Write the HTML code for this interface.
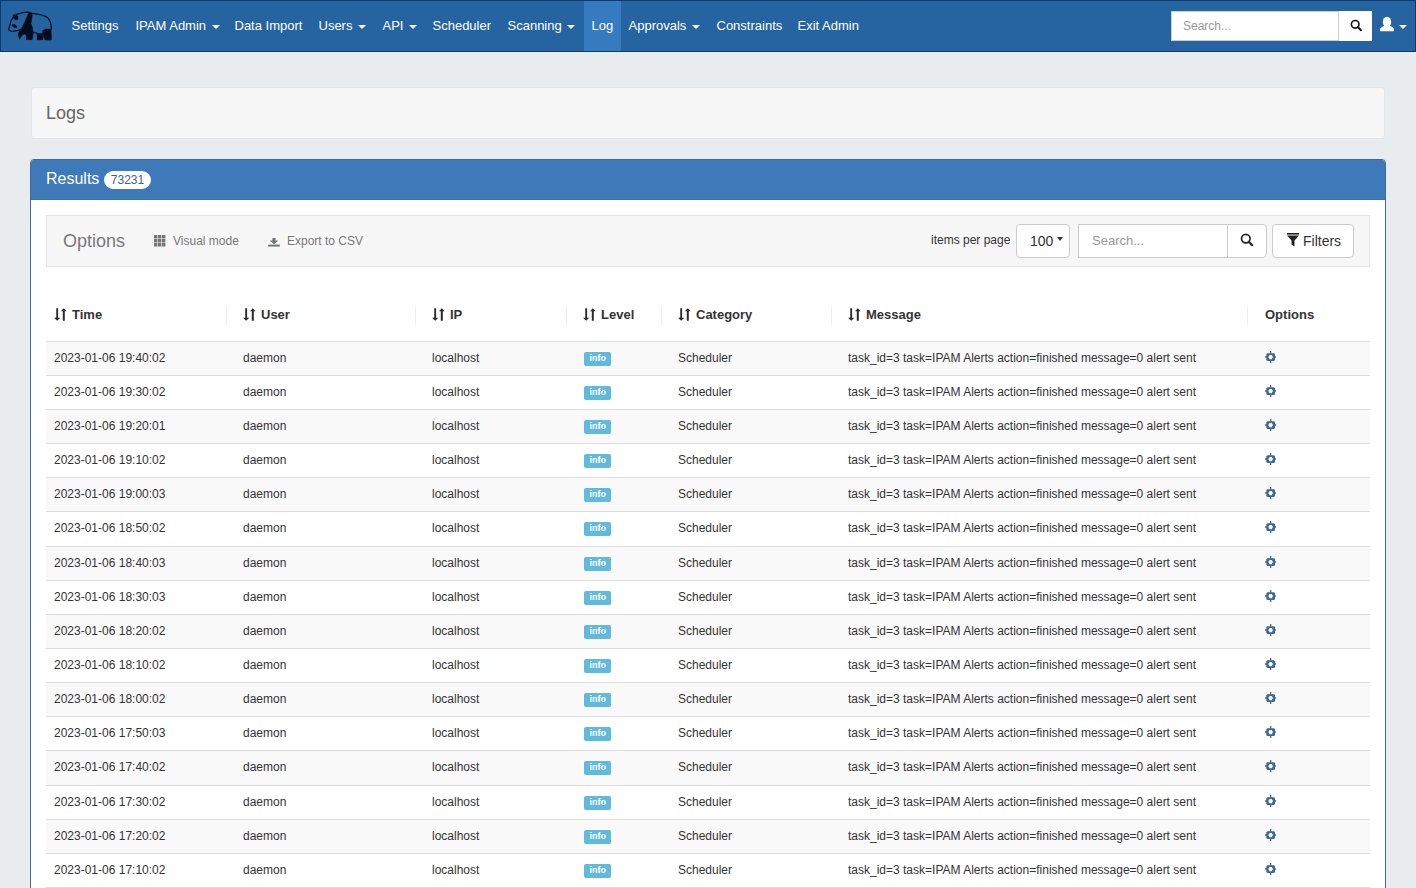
<!DOCTYPE html>
<html><head><meta charset="utf-8">
<style>
*{box-sizing:border-box;margin:0;padding:0}
html,body{width:1416px;height:888px;overflow:hidden}
body{background:#e9ecef;font-family:"Liberation Sans",sans-serif;color:#333;position:relative}
.abs{position:absolute;white-space:nowrap}
#nav{position:absolute;left:0;top:0;width:1416px;height:52px;background:#2564a0;border:1px solid #0e3a6c}
.ni{position:absolute;top:0;height:50px;line-height:50px;font-size:13px;color:#fff;white-space:nowrap}
.caret{display:inline-block;width:0;height:0;border-top:4px solid #fff;border-left:4px solid transparent;border-right:4px solid transparent;vertical-align:middle;margin-left:5.5px;position:relative;top:0px}
#logs{position:absolute;left:31px;top:87px;width:1354px;height:52px;background:#f7f7f7;border:1px solid #e3e5e7;border-radius:3px}
#panel{position:absolute;left:30px;top:159px;width:1356px;height:760px;background:#fff;border:1px solid #46698f;border-radius:4px;overflow:hidden}
#ph{position:absolute;left:0;top:0;width:1354px;height:40px;background:#3e7ab9;border-bottom:1px solid #3a6ea6}
#opt{position:absolute;left:15px;top:55px;width:1324px;height:52px;background:#f7f7f7;border:1px solid #e3e3e3}
table{position:absolute;left:15px;top:180.7px;width:1324px;border-collapse:collapse;font-size:12px;line-height:1.42857143}
td{padding:8px;border-top:1px solid #ddd;white-space:nowrap;vertical-align:top}
tr:nth-child(odd) td{background:#f9f9f9}
.lbl{display:inline-block;background:#61b9dc;color:#fff;font-weight:bold;font-size:9px;line-height:1;padding:2px 5.4px 3px;border-radius:2px;vertical-align:1px;margin-left:1px}
.th{position:absolute;top:0;font-size:13px;font-weight:bold;color:#333}
.sep{position:absolute;width:1px;height:17px;background:#eee}
</style></head><body>
<div id="nav">
  <svg class="abs" style="left:5px;top:7px" width="50" height="36" viewBox="0 0 1233 888">
    <g fill="#020c1c" stroke="#020c1c" stroke-linejoin="round">
      <path fill="none" stroke-width="30" d="M260 160 C330 135 420 100 520 100 C560 102 600 115 650 135 C780 150 920 170 1020 235 C1100 300 1120 400 1115 540"/>
      <path fill="none" stroke-width="30" d="M185 220 C140 270 110 340 95 420 C85 470 60 510 75 545 C100 580 200 575 280 560 C320 552 350 540 385 520"/>
      <path stroke-width="8" d="M175 170 L260 152 L300 225 L292 285 L232 292 L180 250 Z"/>
      <path stroke-width="8" d="M150 415 L205 400 L268 445 L266 490 L205 482 L152 445 Z"/>
      <path stroke-width="8" d="M560 108 L650 132 L642 250 L618 380 L652 480 L672 600 L662 700 L645 782 L492 782 L505 705 L475 648 L425 648 L380 700 L338 770 L305 690 L302 630 L342 560 L402 470 L442 380 L502 250 Z"/>
      <path fill="none" stroke-width="26" d="M665 600 C700 610 730 615 760 625"/>
      <path stroke-width="8" d="M755 622 L905 632 L912 788 L762 788 L772 700 Z"/>
      <path stroke-width="8" d="M902 560 C942 510 1062 500 1112 540 L1125 778 L1100 795 L965 790 L930 730 L905 640 Z"/>
    </g>
  </svg>
  <div class="ni" style="left:70.5px">Settings</div>
  <div class="ni" style="left:134.5px">IPAM Admin<span class="caret"></span></div>
  <div class="ni" style="left:233.5px">Data Import</div>
  <div class="ni" style="left:317.5px">Users<span class="caret"></span></div>
  <div class="ni" style="left:381.5px">API<span class="caret"></span></div>
  <div class="ni" style="left:431.5px">Scheduler</div>
  <div class="ni" style="left:506.5px">Scanning<span class="caret"></span></div>
  <div class="abs" style="left:583px;top:0;width:37px;height:50px;background:#367bc0"></div>
  <div class="ni" style="left:590.5px">Log</div>
  <div class="ni" style="left:627.5px">Approvals<span class="caret"></span></div>
  <div class="ni" style="left:715.5px">Constraints</div>
  <div class="ni" style="left:796.5px">Exit Admin</div>
  <div class="abs" style="left:1170px;top:10px;width:168px;height:30px;background:#fff;border:1px solid #ccc;border-right:0"></div>
  <div class="abs" style="left:1182px;top:10px;height:30px;line-height:30px;font-size:12px;color:#999">Search...</div>
  <div class="abs" style="left:1337px;top:10px;width:34px;height:30px;background:#fff;border-left:1px solid #ccc"></div>
  <svg class="abs" style="left:1348px;top:17px" width="14" height="14" viewBox="0 0 14 14"><circle cx="6.2" cy="6.3" r="3.8" fill="none" stroke="#111" stroke-width="1.6"/><path d="M9 9.2 L12 12.2" stroke="#111" stroke-width="2" stroke-linecap="round"/></svg>
  <svg class="abs" style="left:1378px;top:15px" width="16" height="16" viewBox="0 0 16 16"><ellipse cx="8" cy="6" rx="4.2" ry="5.2" fill="#fff"/><path d="M1 15.2 L1 13.5 C1 11.8 3.5 10.8 5.5 9.8 L10.5 9.8 C12.5 10.8 15 11.8 15 13.5 L15 15.2 Z" fill="#fff"/></svg>
  <span class="caret" style="position:absolute;margin:0;left:1398px;top:24px"></span>
</div>

<div id="logs"><div class="abs" style="left:14px;top:13px;font-size:18px;line-height:24px;color:#666">Logs</div></div>

<div id="panel">
  <div id="ph">
    <div class="abs" style="left:15px;top:9px;font-size:16px;line-height:20px;color:#fff">Results <span style="display:inline-block;background:#fff;color:#41638f;font-size:12px;line-height:12px;padding:3px 7px;border-radius:10px;vertical-align:0px">73231</span></div>
  </div>
  <div id="opt">
    <div class="abs" style="left:16px;top:13px;font-size:18px;line-height:24px;color:#777">Options</div>
    <svg class="abs" style="left:107px;top:19px" width="12" height="12" viewBox="0 0 12 12" fill="#777"><path d="M0 0h3.4v3.4H0zM4 0h3.4v3.4H4zM8 0h3.4v3.4H8zM0 4h3.4v3.4H0zM4 4h3.4v3.4H4zM8 4h3.4v3.4H8zM0 8h3.4v3.4H0zM4 8h3.4v3.4H4zM8 8h3.4v3.4H8z"/></svg>
    <div class="abs" style="left:126px;top:16px;font-size:12px;line-height:18px;color:#777">Visual mode</div>
    <svg class="abs" style="left:221px;top:22px" width="12" height="9" viewBox="0 0 12 9" fill="#777"><path d="M4.4 0 H7.6 V2.6 H10.3 L6 6.2 L1.7 2.6 H4.4 Z"/><rect x="0.2" y="6.6" width="11.6" height="2"/></svg>
    <div class="abs" style="left:240px;top:16px;font-size:12px;line-height:18px;color:#777">Export to CSV</div>
    <div class="abs" style="left:884px;top:15px;font-size:12px;line-height:18px;color:#333">items per page</div>
    <div class="abs" style="left:969px;top:8px;width:54px;height:34px;background:#fff;border:1px solid #ccc;border-radius:4px"></div>
    <div class="abs" style="left:983px;top:15px;font-size:14px;line-height:20px;color:#333">100</div>
    <span class="abs" style="left:1010px;top:21px;width:0;height:0;border-top:4px solid #333;border-left:3.5px solid transparent;border-right:3.5px solid transparent"></span>
    <div class="abs" style="left:1031px;top:8px;width:189px;height:34px;background:#fff;border:1px solid #ccc;border-radius:0 4px 4px 0"></div>
    <div class="abs" style="left:1180px;top:8px;width:1px;height:34px;background:#ccc"></div>
    <div class="abs" style="left:1045px;top:16px;font-size:13px;line-height:18px;color:#999">Search...</div>
    <svg class="abs" style="left:1193px;top:17px" width="14" height="14" viewBox="0 0 14 14"><circle cx="5.8" cy="5.6" r="4.3" fill="none" stroke="#222" stroke-width="1.7"/><path d="M9 9 L12.2 12.2" stroke="#222" stroke-width="2.2" stroke-linecap="round"/></svg>
    <div class="abs" style="left:1225px;top:8px;width:82px;height:34px;background:#fff;border:1px solid #ccc;border-radius:4px"></div>
    <svg class="abs" style="left:1240px;top:17px" width="12" height="14" viewBox="0 0 12 14" fill="#222"><rect x="0" y="0" width="12" height="1.6"/><path d="M0 2.5 H12 L7.5 7.5 V13.5 L4.5 11.5 V7.5 Z"/></svg>
    <div class="abs" style="left:1256px;top:15px;font-size:14px;line-height:20px;color:#333">Filters</div>
  </div>
  <div class="sep" style="left:195px;top:148px"></div>
  <div class="sep" style="left:384px;top:148px"></div>
  <div class="sep" style="left:535px;top:148px"></div>
  <div class="sep" style="left:630px;top:148px"></div>
  <div class="sep" style="left:800px;top:148px"></div>
  <div class="sep" style="left:1216px;top:148px"></div>
  <div id="thead"><div class="th" style="left:23px;top:146px;line-height:18px"><svg width="13" height="13" viewBox="0 0 13 13" style="vertical-align:-2px;margin-right:5px"><path fill="#2a2a2a" d="M2.25 0.2 H4.1 V9.8 H6.3 L3.15 12.8 L0 9.8 H2.25 Z M8.8 12.8 H10.8 V3.3 H12.6 L9.8 0.2 L7.0 3.3 H8.8 Z"/></svg>Time</div><div class="th" style="left:212px;top:146px;line-height:18px"><svg width="13" height="13" viewBox="0 0 13 13" style="vertical-align:-2px;margin-right:5px"><path fill="#2a2a2a" d="M2.25 0.2 H4.1 V9.8 H6.3 L3.15 12.8 L0 9.8 H2.25 Z M8.8 12.8 H10.8 V3.3 H12.6 L9.8 0.2 L7.0 3.3 H8.8 Z"/></svg>User</div><div class="th" style="left:401px;top:146px;line-height:18px"><svg width="13" height="13" viewBox="0 0 13 13" style="vertical-align:-2px;margin-right:5px"><path fill="#2a2a2a" d="M2.25 0.2 H4.1 V9.8 H6.3 L3.15 12.8 L0 9.8 H2.25 Z M8.8 12.8 H10.8 V3.3 H12.6 L9.8 0.2 L7.0 3.3 H8.8 Z"/></svg>IP</div><div class="th" style="left:552px;top:146px;line-height:18px"><svg width="13" height="13" viewBox="0 0 13 13" style="vertical-align:-2px;margin-right:5px"><path fill="#2a2a2a" d="M2.25 0.2 H4.1 V9.8 H6.3 L3.15 12.8 L0 9.8 H2.25 Z M8.8 12.8 H10.8 V3.3 H12.6 L9.8 0.2 L7.0 3.3 H8.8 Z"/></svg>Level</div><div class="th" style="left:647px;top:146px;line-height:18px"><svg width="13" height="13" viewBox="0 0 13 13" style="vertical-align:-2px;margin-right:5px"><path fill="#2a2a2a" d="M2.25 0.2 H4.1 V9.8 H6.3 L3.15 12.8 L0 9.8 H2.25 Z M8.8 12.8 H10.8 V3.3 H12.6 L9.8 0.2 L7.0 3.3 H8.8 Z"/></svg>Category</div><div class="th" style="left:817px;top:146px;line-height:18px"><svg width="13" height="13" viewBox="0 0 13 13" style="vertical-align:-2px;margin-right:5px"><path fill="#2a2a2a" d="M2.25 0.2 H4.1 V9.8 H6.3 L3.15 12.8 L0 9.8 H2.25 Z M8.8 12.8 H10.8 V3.3 H12.6 L9.8 0.2 L7.0 3.3 H8.8 Z"/></svg>Message</div><div class="th" style="left:1234px;top:146px;line-height:18px">Options</div></div>
  <table id="tb"><tbody id="tbody"><tr><td style="width:189px">2023-01-06 19:40:02</td><td style="width:189px">daemon</td><td style="width:151px">localhost</td><td style="width:95px"><span class="lbl">info</span></td><td style="width:170px">Scheduler</td><td style="width:416px">task_id=3 task=IPAM Alerts action=finished message=0 alert sent</td><td style="padding-left:9px"><svg width="12" height="12" viewBox="0 0 12 12" style="vertical-align:-1px"><path fill="#3d6896" fill-rule="evenodd" d="M2.3 2.2 H5 V0 H6.3 V2.2 H9 L10 3.2 V5.2 H11 V6.7 H10 V8.9 L9 9.9 H6.3 V11.9 H5 V9.9 H2.3 L1.3 8.9 V6.7 H0 V5.2 H1.3 V3.2 Z M4.6 3.9 H6.7 L8 6.05 L6.7 8.2 H4.6 L3.3 6.05 Z"/></svg></td></tr><tr><td style="width:189px">2023-01-06 19:30:02</td><td style="width:189px">daemon</td><td style="width:151px">localhost</td><td style="width:95px"><span class="lbl">info</span></td><td style="width:170px">Scheduler</td><td style="width:416px">task_id=3 task=IPAM Alerts action=finished message=0 alert sent</td><td style="padding-left:9px"><svg width="12" height="12" viewBox="0 0 12 12" style="vertical-align:-1px"><path fill="#3d6896" fill-rule="evenodd" d="M2.3 2.2 H5 V0 H6.3 V2.2 H9 L10 3.2 V5.2 H11 V6.7 H10 V8.9 L9 9.9 H6.3 V11.9 H5 V9.9 H2.3 L1.3 8.9 V6.7 H0 V5.2 H1.3 V3.2 Z M4.6 3.9 H6.7 L8 6.05 L6.7 8.2 H4.6 L3.3 6.05 Z"/></svg></td></tr><tr><td style="width:189px">2023-01-06 19:20:01</td><td style="width:189px">daemon</td><td style="width:151px">localhost</td><td style="width:95px"><span class="lbl">info</span></td><td style="width:170px">Scheduler</td><td style="width:416px">task_id=3 task=IPAM Alerts action=finished message=0 alert sent</td><td style="padding-left:9px"><svg width="12" height="12" viewBox="0 0 12 12" style="vertical-align:-1px"><path fill="#3d6896" fill-rule="evenodd" d="M2.3 2.2 H5 V0 H6.3 V2.2 H9 L10 3.2 V5.2 H11 V6.7 H10 V8.9 L9 9.9 H6.3 V11.9 H5 V9.9 H2.3 L1.3 8.9 V6.7 H0 V5.2 H1.3 V3.2 Z M4.6 3.9 H6.7 L8 6.05 L6.7 8.2 H4.6 L3.3 6.05 Z"/></svg></td></tr><tr><td style="width:189px">2023-01-06 19:10:02</td><td style="width:189px">daemon</td><td style="width:151px">localhost</td><td style="width:95px"><span class="lbl">info</span></td><td style="width:170px">Scheduler</td><td style="width:416px">task_id=3 task=IPAM Alerts action=finished message=0 alert sent</td><td style="padding-left:9px"><svg width="12" height="12" viewBox="0 0 12 12" style="vertical-align:-1px"><path fill="#3d6896" fill-rule="evenodd" d="M2.3 2.2 H5 V0 H6.3 V2.2 H9 L10 3.2 V5.2 H11 V6.7 H10 V8.9 L9 9.9 H6.3 V11.9 H5 V9.9 H2.3 L1.3 8.9 V6.7 H0 V5.2 H1.3 V3.2 Z M4.6 3.9 H6.7 L8 6.05 L6.7 8.2 H4.6 L3.3 6.05 Z"/></svg></td></tr><tr><td style="width:189px">2023-01-06 19:00:03</td><td style="width:189px">daemon</td><td style="width:151px">localhost</td><td style="width:95px"><span class="lbl">info</span></td><td style="width:170px">Scheduler</td><td style="width:416px">task_id=3 task=IPAM Alerts action=finished message=0 alert sent</td><td style="padding-left:9px"><svg width="12" height="12" viewBox="0 0 12 12" style="vertical-align:-1px"><path fill="#3d6896" fill-rule="evenodd" d="M2.3 2.2 H5 V0 H6.3 V2.2 H9 L10 3.2 V5.2 H11 V6.7 H10 V8.9 L9 9.9 H6.3 V11.9 H5 V9.9 H2.3 L1.3 8.9 V6.7 H0 V5.2 H1.3 V3.2 Z M4.6 3.9 H6.7 L8 6.05 L6.7 8.2 H4.6 L3.3 6.05 Z"/></svg></td></tr><tr><td style="width:189px">2023-01-06 18:50:02</td><td style="width:189px">daemon</td><td style="width:151px">localhost</td><td style="width:95px"><span class="lbl">info</span></td><td style="width:170px">Scheduler</td><td style="width:416px">task_id=3 task=IPAM Alerts action=finished message=0 alert sent</td><td style="padding-left:9px"><svg width="12" height="12" viewBox="0 0 12 12" style="vertical-align:-1px"><path fill="#3d6896" fill-rule="evenodd" d="M2.3 2.2 H5 V0 H6.3 V2.2 H9 L10 3.2 V5.2 H11 V6.7 H10 V8.9 L9 9.9 H6.3 V11.9 H5 V9.9 H2.3 L1.3 8.9 V6.7 H0 V5.2 H1.3 V3.2 Z M4.6 3.9 H6.7 L8 6.05 L6.7 8.2 H4.6 L3.3 6.05 Z"/></svg></td></tr><tr><td style="width:189px">2023-01-06 18:40:03</td><td style="width:189px">daemon</td><td style="width:151px">localhost</td><td style="width:95px"><span class="lbl">info</span></td><td style="width:170px">Scheduler</td><td style="width:416px">task_id=3 task=IPAM Alerts action=finished message=0 alert sent</td><td style="padding-left:9px"><svg width="12" height="12" viewBox="0 0 12 12" style="vertical-align:-1px"><path fill="#3d6896" fill-rule="evenodd" d="M2.3 2.2 H5 V0 H6.3 V2.2 H9 L10 3.2 V5.2 H11 V6.7 H10 V8.9 L9 9.9 H6.3 V11.9 H5 V9.9 H2.3 L1.3 8.9 V6.7 H0 V5.2 H1.3 V3.2 Z M4.6 3.9 H6.7 L8 6.05 L6.7 8.2 H4.6 L3.3 6.05 Z"/></svg></td></tr><tr><td style="width:189px">2023-01-06 18:30:03</td><td style="width:189px">daemon</td><td style="width:151px">localhost</td><td style="width:95px"><span class="lbl">info</span></td><td style="width:170px">Scheduler</td><td style="width:416px">task_id=3 task=IPAM Alerts action=finished message=0 alert sent</td><td style="padding-left:9px"><svg width="12" height="12" viewBox="0 0 12 12" style="vertical-align:-1px"><path fill="#3d6896" fill-rule="evenodd" d="M2.3 2.2 H5 V0 H6.3 V2.2 H9 L10 3.2 V5.2 H11 V6.7 H10 V8.9 L9 9.9 H6.3 V11.9 H5 V9.9 H2.3 L1.3 8.9 V6.7 H0 V5.2 H1.3 V3.2 Z M4.6 3.9 H6.7 L8 6.05 L6.7 8.2 H4.6 L3.3 6.05 Z"/></svg></td></tr><tr><td style="width:189px">2023-01-06 18:20:02</td><td style="width:189px">daemon</td><td style="width:151px">localhost</td><td style="width:95px"><span class="lbl">info</span></td><td style="width:170px">Scheduler</td><td style="width:416px">task_id=3 task=IPAM Alerts action=finished message=0 alert sent</td><td style="padding-left:9px"><svg width="12" height="12" viewBox="0 0 12 12" style="vertical-align:-1px"><path fill="#3d6896" fill-rule="evenodd" d="M2.3 2.2 H5 V0 H6.3 V2.2 H9 L10 3.2 V5.2 H11 V6.7 H10 V8.9 L9 9.9 H6.3 V11.9 H5 V9.9 H2.3 L1.3 8.9 V6.7 H0 V5.2 H1.3 V3.2 Z M4.6 3.9 H6.7 L8 6.05 L6.7 8.2 H4.6 L3.3 6.05 Z"/></svg></td></tr><tr><td style="width:189px">2023-01-06 18:10:02</td><td style="width:189px">daemon</td><td style="width:151px">localhost</td><td style="width:95px"><span class="lbl">info</span></td><td style="width:170px">Scheduler</td><td style="width:416px">task_id=3 task=IPAM Alerts action=finished message=0 alert sent</td><td style="padding-left:9px"><svg width="12" height="12" viewBox="0 0 12 12" style="vertical-align:-1px"><path fill="#3d6896" fill-rule="evenodd" d="M2.3 2.2 H5 V0 H6.3 V2.2 H9 L10 3.2 V5.2 H11 V6.7 H10 V8.9 L9 9.9 H6.3 V11.9 H5 V9.9 H2.3 L1.3 8.9 V6.7 H0 V5.2 H1.3 V3.2 Z M4.6 3.9 H6.7 L8 6.05 L6.7 8.2 H4.6 L3.3 6.05 Z"/></svg></td></tr><tr><td style="width:189px">2023-01-06 18:00:02</td><td style="width:189px">daemon</td><td style="width:151px">localhost</td><td style="width:95px"><span class="lbl">info</span></td><td style="width:170px">Scheduler</td><td style="width:416px">task_id=3 task=IPAM Alerts action=finished message=0 alert sent</td><td style="padding-left:9px"><svg width="12" height="12" viewBox="0 0 12 12" style="vertical-align:-1px"><path fill="#3d6896" fill-rule="evenodd" d="M2.3 2.2 H5 V0 H6.3 V2.2 H9 L10 3.2 V5.2 H11 V6.7 H10 V8.9 L9 9.9 H6.3 V11.9 H5 V9.9 H2.3 L1.3 8.9 V6.7 H0 V5.2 H1.3 V3.2 Z M4.6 3.9 H6.7 L8 6.05 L6.7 8.2 H4.6 L3.3 6.05 Z"/></svg></td></tr><tr><td style="width:189px">2023-01-06 17:50:03</td><td style="width:189px">daemon</td><td style="width:151px">localhost</td><td style="width:95px"><span class="lbl">info</span></td><td style="width:170px">Scheduler</td><td style="width:416px">task_id=3 task=IPAM Alerts action=finished message=0 alert sent</td><td style="padding-left:9px"><svg width="12" height="12" viewBox="0 0 12 12" style="vertical-align:-1px"><path fill="#3d6896" fill-rule="evenodd" d="M2.3 2.2 H5 V0 H6.3 V2.2 H9 L10 3.2 V5.2 H11 V6.7 H10 V8.9 L9 9.9 H6.3 V11.9 H5 V9.9 H2.3 L1.3 8.9 V6.7 H0 V5.2 H1.3 V3.2 Z M4.6 3.9 H6.7 L8 6.05 L6.7 8.2 H4.6 L3.3 6.05 Z"/></svg></td></tr><tr><td style="width:189px">2023-01-06 17:40:02</td><td style="width:189px">daemon</td><td style="width:151px">localhost</td><td style="width:95px"><span class="lbl">info</span></td><td style="width:170px">Scheduler</td><td style="width:416px">task_id=3 task=IPAM Alerts action=finished message=0 alert sent</td><td style="padding-left:9px"><svg width="12" height="12" viewBox="0 0 12 12" style="vertical-align:-1px"><path fill="#3d6896" fill-rule="evenodd" d="M2.3 2.2 H5 V0 H6.3 V2.2 H9 L10 3.2 V5.2 H11 V6.7 H10 V8.9 L9 9.9 H6.3 V11.9 H5 V9.9 H2.3 L1.3 8.9 V6.7 H0 V5.2 H1.3 V3.2 Z M4.6 3.9 H6.7 L8 6.05 L6.7 8.2 H4.6 L3.3 6.05 Z"/></svg></td></tr><tr><td style="width:189px">2023-01-06 17:30:02</td><td style="width:189px">daemon</td><td style="width:151px">localhost</td><td style="width:95px"><span class="lbl">info</span></td><td style="width:170px">Scheduler</td><td style="width:416px">task_id=3 task=IPAM Alerts action=finished message=0 alert sent</td><td style="padding-left:9px"><svg width="12" height="12" viewBox="0 0 12 12" style="vertical-align:-1px"><path fill="#3d6896" fill-rule="evenodd" d="M2.3 2.2 H5 V0 H6.3 V2.2 H9 L10 3.2 V5.2 H11 V6.7 H10 V8.9 L9 9.9 H6.3 V11.9 H5 V9.9 H2.3 L1.3 8.9 V6.7 H0 V5.2 H1.3 V3.2 Z M4.6 3.9 H6.7 L8 6.05 L6.7 8.2 H4.6 L3.3 6.05 Z"/></svg></td></tr><tr><td style="width:189px">2023-01-06 17:20:02</td><td style="width:189px">daemon</td><td style="width:151px">localhost</td><td style="width:95px"><span class="lbl">info</span></td><td style="width:170px">Scheduler</td><td style="width:416px">task_id=3 task=IPAM Alerts action=finished message=0 alert sent</td><td style="padding-left:9px"><svg width="12" height="12" viewBox="0 0 12 12" style="vertical-align:-1px"><path fill="#3d6896" fill-rule="evenodd" d="M2.3 2.2 H5 V0 H6.3 V2.2 H9 L10 3.2 V5.2 H11 V6.7 H10 V8.9 L9 9.9 H6.3 V11.9 H5 V9.9 H2.3 L1.3 8.9 V6.7 H0 V5.2 H1.3 V3.2 Z M4.6 3.9 H6.7 L8 6.05 L6.7 8.2 H4.6 L3.3 6.05 Z"/></svg></td></tr><tr><td style="width:189px">2023-01-06 17:10:02</td><td style="width:189px">daemon</td><td style="width:151px">localhost</td><td style="width:95px"><span class="lbl">info</span></td><td style="width:170px">Scheduler</td><td style="width:416px">task_id=3 task=IPAM Alerts action=finished message=0 alert sent</td><td style="padding-left:9px"><svg width="12" height="12" viewBox="0 0 12 12" style="vertical-align:-1px"><path fill="#3d6896" fill-rule="evenodd" d="M2.3 2.2 H5 V0 H6.3 V2.2 H9 L10 3.2 V5.2 H11 V6.7 H10 V8.9 L9 9.9 H6.3 V11.9 H5 V9.9 H2.3 L1.3 8.9 V6.7 H0 V5.2 H1.3 V3.2 Z M4.6 3.9 H6.7 L8 6.05 L6.7 8.2 H4.6 L3.3 6.05 Z"/></svg></td></tr><tr><td style="width:189px">2023-01-06 17:00:02</td><td style="width:189px">daemon</td><td style="width:151px">localhost</td><td style="width:95px"><span class="lbl">info</span></td><td style="width:170px">Scheduler</td><td style="width:416px">task_id=3 task=IPAM Alerts action=finished message=0 alert sent</td><td style="padding-left:9px"><svg width="12" height="12" viewBox="0 0 12 12" style="vertical-align:-1px"><path fill="#3d6896" fill-rule="evenodd" d="M2.3 2.2 H5 V0 H6.3 V2.2 H9 L10 3.2 V5.2 H11 V6.7 H10 V8.9 L9 9.9 H6.3 V11.9 H5 V9.9 H2.3 L1.3 8.9 V6.7 H0 V5.2 H1.3 V3.2 Z M4.6 3.9 H6.7 L8 6.05 L6.7 8.2 H4.6 L3.3 6.05 Z"/></svg></td></tr><tr><td style="width:189px">2023-01-06 16:50:02</td><td style="width:189px">daemon</td><td style="width:151px">localhost</td><td style="width:95px"><span class="lbl">info</span></td><td style="width:170px">Scheduler</td><td style="width:416px">task_id=3 task=IPAM Alerts action=finished message=0 alert sent</td><td style="padding-left:9px"><svg width="12" height="12" viewBox="0 0 12 12" style="vertical-align:-1px"><path fill="#3d6896" fill-rule="evenodd" d="M2.3 2.2 H5 V0 H6.3 V2.2 H9 L10 3.2 V5.2 H11 V6.7 H10 V8.9 L9 9.9 H6.3 V11.9 H5 V9.9 H2.3 L1.3 8.9 V6.7 H0 V5.2 H1.3 V3.2 Z M4.6 3.9 H6.7 L8 6.05 L6.7 8.2 H4.6 L3.3 6.05 Z"/></svg></td></tr></tbody></table>
</div>
</body></html>
